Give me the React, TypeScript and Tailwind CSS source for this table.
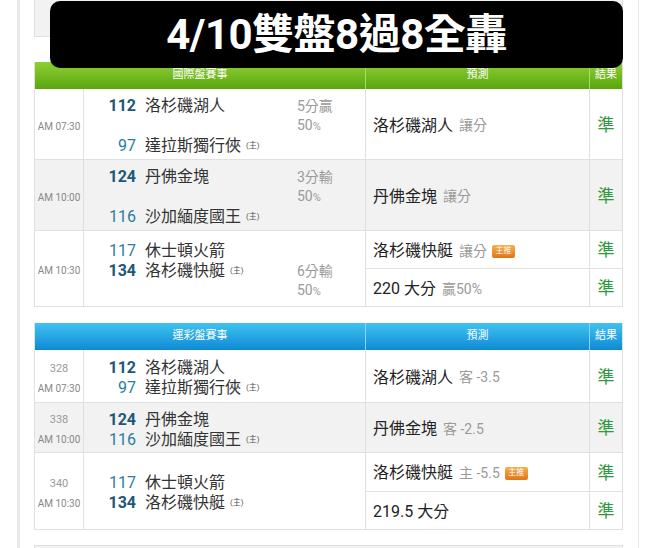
import React from 'react';

type Pick = { main: string; note?: string; badge?: boolean };

interface Game {
  code?: string;
  time: string;
  away: { no: string; name: string; bold: boolean };
  home: { no: string; name: string; bold: boolean };
  spread?: string[];
  picks: Pick[];
  layout: 'split' | 'top' | 'center';
  gray: boolean;
  h: string;
}

const FONT = { fontFamily: 'Roboto, "Noto Sans CJK TC", "Noto Sans", sans-serif' };

const intl: Game[] = [
  {
    time: 'AM 07:30',
    away: { no: '112', name: '洛杉磯湖人', bold: true },
    home: { no: '97', name: '達拉斯獨行俠', bold: false },
    spread: ['5分贏', '50'],
    picks: [{ main: '洛杉磯湖人', note: '讓分' }],
    layout: 'split',
    gray: false,
    h: 'h-[71px]',
  },
  {
    time: 'AM 10:00',
    away: { no: '124', name: '丹佛金塊', bold: true },
    home: { no: '116', name: '沙加緬度國王', bold: false },
    spread: ['3分輸', '50'],
    picks: [{ main: '丹佛金塊', note: '讓分' }],
    layout: 'split',
    gray: true,
    h: 'h-[71px]',
  },
  {
    time: 'AM 10:30',
    away: { no: '117', name: '休士頓火箭', bold: false },
    home: { no: '134', name: '洛杉磯快艇', bold: true },
    spread: ['6分輸', '50'],
    picks: [
      { main: '洛杉磯快艇', note: '讓分', badge: true },
      { main: '220 大分', note: '贏50%' },
    ],
    layout: 'top',
    gray: false,
    h: 'h-[76px]',
  },
];

const lottery: Game[] = [
  {
    code: '328',
    time: 'AM 07:30',
    away: { no: '112', name: '洛杉磯湖人', bold: true },
    home: { no: '97', name: '達拉斯獨行俠', bold: false },
    picks: [{ main: '洛杉磯湖人', note: '客 -3.5' }],
    layout: 'center',
    gray: false,
    h: 'h-[53px]',
  },
  {
    code: '338',
    time: 'AM 10:00',
    away: { no: '124', name: '丹佛金塊', bold: true },
    home: { no: '116', name: '沙加緬度國王', bold: false },
    picks: [{ main: '丹佛金塊', note: '客 -2.5' }],
    layout: 'center',
    gray: true,
    h: 'h-[50px]',
  },
  {
    code: '340',
    time: 'AM 10:30',
    away: { no: '117', name: '休士頓火箭', bold: false },
    home: { no: '134', name: '洛杉磯快艇', bold: true },
    picks: [
      { main: '洛杉磯快艇', note: '主 -5.5', badge: true },
      { main: '219.5 大分' },
    ],
    layout: 'center',
    gray: false,
    h: 'h-[77px]',
  },
];

const TeamLine = ({ no, name, bold, home }: { no: string; name: string; bold: boolean; home?: boolean }) => (
  <div className="flex items-center h-[20px] leading-[20px]">
    <span
      className={`w-[52px] text-right text-[16px] ${bold ? 'font-bold text-[#1d5878]' : 'text-[#2b7ca4]'}`}
    >
      {no}
    </span>
    <span className="ml-[9px] text-[16px] text-[#333]">{name}</span>
    {home && <span className="ml-[5px] text-[8px] text-[#555]">(主)</span>}
  </div>
);

const Badge = () => (
  <span className="ml-[5px] inline-flex items-center justify-center h-[13px] w-[23px] rounded-[2px] bg-gradient-to-b from-[#f6b04a] to-[#e07416] text-[8px] leading-none text-white">
    主推
  </span>
);

const GameRow = ({ g }: { g: Game }) => {
  const teamsJustify =
    g.layout === 'split'
      ? 'justify-between pt-[7px] pb-[3px]'
      : g.layout === 'top'
        ? 'justify-start pt-[10px]'
        : 'justify-center pt-[4px]';
  const spreadJustify = g.layout === 'top' ? 'justify-end pb-[5px]' : 'justify-start pt-[8px]';
  return (
    <div className={`grid grid-cols-[49px_282px_224px_1fr] border-b border-[#e0e0e0] ${g.h} ${g.gray ? 'bg-[#f2f2f2]' : 'bg-white'}`}>
      <div className="border-r border-[#e0e0e0] flex flex-col items-center justify-center pt-[5px] text-[10px] text-[#888] leading-[20px]">
        {g.code && <span className="text-[11px] text-[#999]">{g.code}</span>}
        <span>{g.time}</span>
      </div>
      <div className="border-r border-[#e0e0e0] flex">
        <div className={`w-[213px] flex flex-col ${teamsJustify}`}>
          <TeamLine {...g.away} />
          <TeamLine {...g.home} home />
        </div>
        {g.spread && (
          <div className={`flex flex-col ${spreadJustify} text-[14px] leading-[19px] text-[#9a9a9a]`}>
            <span>{g.spread[0]}</span>
            <span>
              {g.spread[1]}
              <span className="text-[11px]">%</span>
            </span>
          </div>
        )}
      </div>
      <div className="border-r border-[#e0e0e0] flex flex-col">
        {g.picks.map((p, i) => (
          <div
            key={i}
            className={`flex-1 flex items-center pl-[7px] pt-[3px] ${i > 0 ? 'border-t border-[#e0e0e0]' : ''}`}
          >
            <span className="text-[16px] text-[#222]">{p.main}</span>
            {p.note && <span className="ml-[6px] text-[14px] text-[#9a9a9a]">{p.note}</span>}
            {p.badge && <Badge />}
          </div>
        ))}
      </div>
      <div className="flex flex-col">
        {g.picks.map((_, i) => (
          <div
            key={i}
            className={`flex-1 flex items-center justify-center pt-[3px] text-[17px] text-[#2f9a3c] ${i > 0 ? 'border-t border-[#e0e0e0]' : ''}`}
          >
            準
          </div>
        ))}
      </div>
    </div>
  );
};

const Table = ({ title, games, headClass, sepClass }: { title: string; games: Game[]; headClass: string; sepClass: string }) => (
  <div className="border-x border-[#e0e0e0]">
    <div className={`grid grid-cols-[49px_282px_224px_1fr] h-[27px] text-[11px] text-white ${headClass}`}>
      <div className={`col-span-2 flex items-center justify-center border-r ${sepClass}`}>{title}</div>
      <div className={`flex items-center justify-center border-r ${sepClass}`}>預測</div>
      <div className="flex items-center justify-center">結果</div>
    </div>
    {games.map((g, i) => (
      <GameRow key={i} g={g} />
    ))}
  </div>
);

export default function App() {
  return (
    <div className="w-[660px] h-[548px] overflow-hidden bg-white" style={FONT}>
      <div className="relative ml-[17px] w-[622px] h-full border-l-[3px] border-r border-[#e9e9e9] pl-[14px] pr-[15px]">
        <div className="h-[37px] bg-[#f2f2f2] border-b border-x border-[#e0e0e0]" />
        <div className="h-[25px]" />
        <Table
          title="國際盤賽事"
          games={intl}
          headClass="bg-gradient-to-b from-[#8ed033] to-[#5aa60b]"
          sepClass="border-[#a8dd6e]"
        />
        <div className="h-[16px]" />
        <Table
          title="運彩盤賽事"
          games={lottery}
          headClass="bg-gradient-to-b from-[#3fc3f0] to-[#0b8ad4]"
          sepClass="border-[#8fd6f5]"
        />
        <div className="h-[15px]" />
        <div className="h-[10px] bg-[#f2f2f2] border-t border-x border-[#e0e0e0]" />

        <div className="absolute left-[30px] top-[1px] w-[573px] h-[67px] rounded-[10px] bg-black flex items-center justify-center">
          <span className="text-white font-bold text-[42px] leading-none tracking-[-0.5px]">4/10雙盤8過8全轟</span>
        </div>
      </div>
    </div>
  );
}
